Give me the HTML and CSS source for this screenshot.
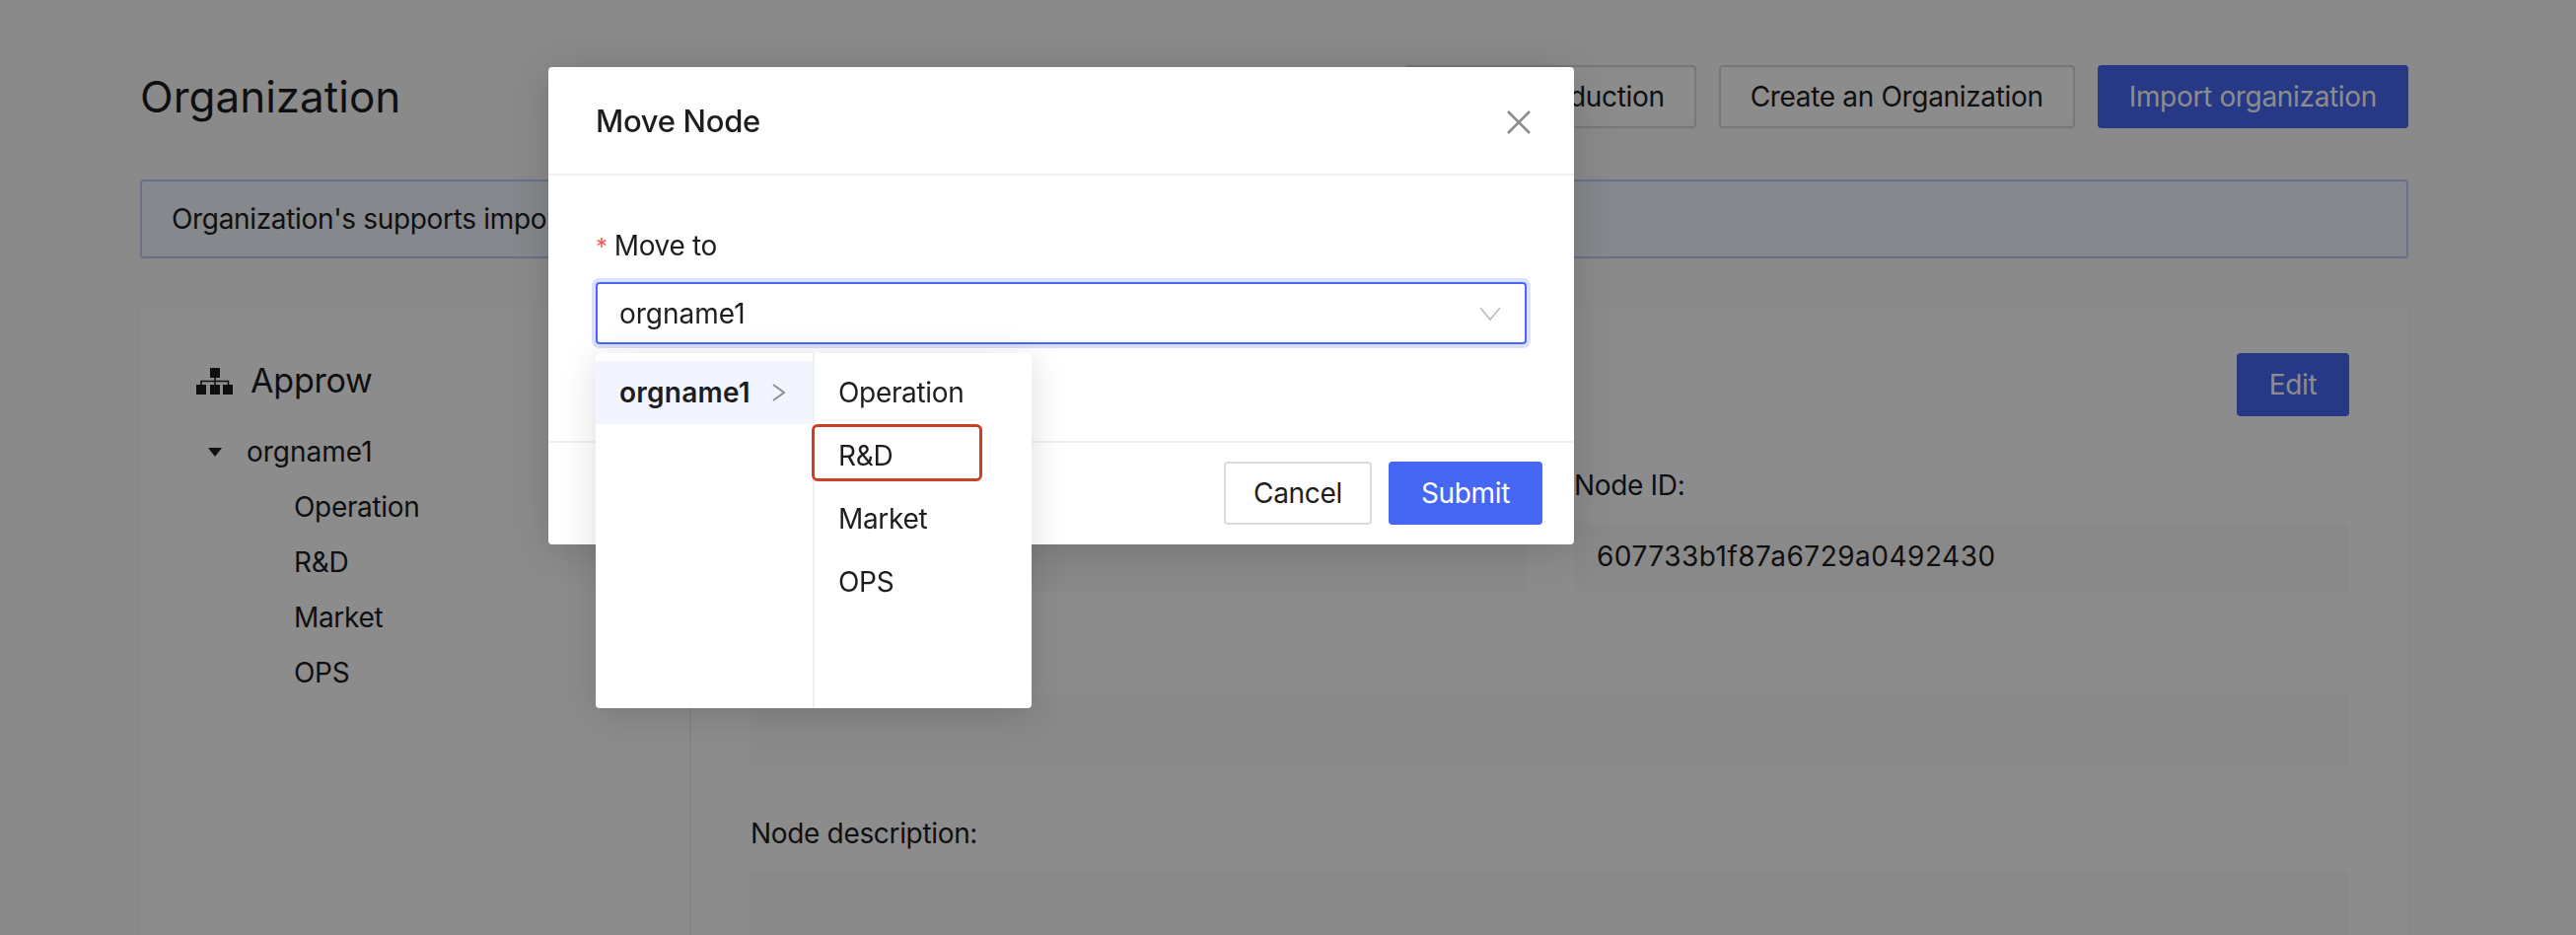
FILE: index.html
```html
<!DOCTYPE html>
<html lang="en">
<head>
<meta charset="utf-8">
<title>Organization</title>
<link rel="stylesheet" href="styles.css">
</head>
<body>
<div class="page">
  <header class="page-head">
    <h1 class="page-title">Organization</h1>
    <div class="head-actions">
      <button class="btn">Node introduction</button>
      <button class="btn">Create an Organization</button>
      <button class="btn btn-primary">Import organization</button>
    </div>
  </header>
  <div class="alert">Organization's supports import</div>
  <section class="card">
    <aside class="tree-col">
      <div class="org-title">
        <svg class="org-icon" viewBox="0 0 37 27" aria-hidden="true"><path d="M14 0h10v10h-10zM0 17h10v10h-10zM14 17h10v10h-10zM27 17h10v10h-10z" fill="#1c1c1c"/><path d="M19 10v7M5 17v-3.500h27.500v3.500" fill="none" stroke="#1c1c1c" stroke-width="1.600"/></svg>
        <span>Approw</span>
      </div>
      <ul class="tree">
        <li class="tree-root"><i class="caret"></i>orgname1</li>
        <li class="tree-leaf">Operation</li>
        <li class="tree-leaf">R&amp;D</li>
        <li class="tree-leaf">Market</li>
        <li class="tree-leaf">OPS</li>
      </ul>
    </aside>
    <div class="detail-col">
      <div class="detail-bar"><button class="btn btn-primary btn-edit">Edit</button></div>
      <div class="field-row">
        <div class="field"><div class="field-label"></div><div class="field-value"></div></div>
        <div class="field"><div class="field-label">Node ID:</div><div class="field-value field-id">607733b1f87a6729a0492430</div></div>
      </div>
      <div class="field-single"><div class="field-value"></div></div>
      <div class="field-desc"><div class="field-label">Node description:</div><div class="field-value field-tall"></div></div>
    </div>
  </section>
</div>

<div class="overlay"></div>

<div class="modal">
  <div class="modal-head">
    <span class="modal-title">Move Node</span>
    <svg class="modal-close" viewBox="0 0 24 24" aria-hidden="true"><path d="M1 1L23 23M23 1L1 23" fill="none" stroke="#8c8c8c" stroke-width="2.500"/></svg>
  </div>
  <div class="modal-body">
    <div class="form-label"><span class="req">*</span>Move to</div>
    <div class="select">
      <span class="select-value">orgname1</span>
      <svg class="select-arrow" viewBox="0 0 22 14" aria-hidden="true"><path d="M1 1L11 13L21 1" fill="none" stroke="#bfbfbf" stroke-width="1.800"/></svg>
    </div>
  </div>
  <div class="modal-foot">
    <button class="btn btn-foot">Cancel</button>
    <button class="btn btn-primary btn-foot">Submit</button>
  </div>
</div>

<div class="cascader">
  <ul class="cascader-col cascader-left">
    <li class="cascader-item is-active">orgname1<svg class="cascader-arrow" viewBox="0 0 13 18" aria-hidden="true"><path d="M1 1L12 9L1 17" fill="none" stroke="#8c8c8c" stroke-width="1.800"/></svg></li>
  </ul>
  <ul class="cascader-col cascader-right">
    <li class="cascader-item">Operation</li>
    <li class="cascader-item is-marked">R&amp;D</li>
    <li class="cascader-item">Market</li>
    <li class="cascader-item">OPS</li>
  </ul>
</div>
</body>
</html>
```

FILE: styles.css
```css
*, *::before, *::after { box-sizing: border-box; }
html, body { margin: 0; height: 948px; overflow: hidden; }
body { background: #fcfcfc; font-family: Inter, "Noto Sans", sans-serif; font-size: 28px; letter-spacing: -.33px; color: #1d1d1f; }
ul { list-style: none; margin: 0; padding: 0; }

.page { width: 2612px; height: 948px; padding: 66px 170px 0 142px; overflow: hidden; }
.page-head { display: flex; justify-content: space-between; align-items: center; height: 64px; }
.page-title { margin: 0; font-size: 44px; font-weight: 400; line-height: 64px; letter-spacing: 0; }
.head-actions { display: flex; gap: 23px; }

.btn { height: 64px; padding: 0 30px; border: 2px solid #d9d9d9; border-radius: 4px; background: #fff; font: inherit; letter-spacing: inherit; color: inherit; white-space: nowrap; }
.btn-primary { background: #4666f4; border-color: #4666f4; color: #fff; }

.alert { margin-top: 52px; height: 80px; padding: 0 30px; border: 2px solid #bfcdf8; border-radius: 4px; background: #f2f8ff; line-height: 76px; white-space: nowrap; }

.card { display: flex; margin-top: 48px; height: 700px; background: #fff; box-shadow: 0 0 6px rgba(0,0,0,.03); }
.tree-col { width: 559px; padding: 54px 0 0 57px; border-right: 2px solid #f0f0f0; flex: none; }
.org-title { display: flex; align-items: center; gap: 18px; font-size: 34px; line-height: 44px; letter-spacing: -.2px; }
.org-icon { width: 37px; height: 27px; flex: none; }
.tree { margin-top: 22px; }
.tree li { height: 56px; line-height: 56px; }
.tree-root { padding-left: 51px; position: relative; letter-spacing: 0; }
.caret { position: absolute; left: 12px; top: 24px; border: 7px solid transparent; border-top: 9px solid #1d1d1f; border-bottom: 0; }
.tree-leaf { padding-left: 99px; }

.detail-col { flex: 1; padding: 48px 60px 0 60px; }
.detail-bar { display: flex; justify-content: flex-end; height: 64px; }
.btn-edit { width: 114px; padding: 0; }
.field-row { display: grid; grid-template-columns: 1fr 1fr; column-gap: 49px; margin-top: 42px; }
.field-label { height: 56px; line-height: 56px; }
.field-value { height: 70px; padding: 0 23px; background: #fafafa; line-height: 68px; margin-top: 10px; }
.field-id { letter-spacing: .5px; }
.field-single { margin-top: 105px; }
.field-desc { margin-top: 42px; }
.field-tall { height: 120px; margin-top: 9px; }

.overlay { position: fixed; inset: 0; background: rgba(0,0,0,.45); }

.modal { position: absolute; left: 556px; top: 68px; width: 1040px; height: 484px; background: #fff; border-radius: 4px; display: flex; flex-direction: column; box-shadow: 0 6px 44px rgba(0,0,0,.16); }
.modal-head { display: flex; justify-content: space-between; align-items: center; height: 110px; padding: 0 44px 0 48px; border-bottom: 2px solid #f0f0f0; flex: none; }
.modal-title { font-size: 31px; font-weight: 500; letter-spacing: -.3px; }
.modal-close { width: 24px; height: 24px; margin-top: 4px; }
.modal-body { flex: 1; padding: 49px 48px 0; }
.form-label { height: 44px; line-height: 44px; }
.req { color: #f5534f; margin-right: 7px; font-size: 24px; }
.select { display: flex; justify-content: space-between; align-items: center; height: 63px; margin-top: 15px; padding: 0 24px 0 22px; border: 2px solid #4666f4; border-radius: 4px; box-shadow: 0 0 0 4px rgba(70,102,244,.2); }
.select-value { letter-spacing: 0; }
.select-arrow { width: 22px; height: 14px; }
.modal-foot { display: flex; justify-content: flex-end; gap: 17px; height: 105px; padding: 19px 32px 0; border-top: 2px solid #f0f0f0; flex: none; }
.btn-foot { padding: 0; width: 150px; }
.btn-primary.btn-foot { width: 156px; }

.cascader { position: absolute; left: 604px; top: 358px; width: 442px; height: 360px; padding: 0; background: #fff; border-radius: 4px; display: flex; box-shadow: 0 6px 36px rgba(0,0,0,.14); }
.cascader-col { padding-top: 8px; height: 100%; }
.cascader-left { width: 222px; border-right: 2px solid #f0f0f0; flex: none; }
.cascader-right { flex: 1; }
.cascader-item { display: flex; align-items: center; height: 64px; padding-left: 24px; position: relative; }
.cascader-left .cascader-item { justify-content: space-between; padding-right: 28px; font-weight: 600; letter-spacing: .25px; }
.is-active { background: #f2f5fe; }
.cascader-arrow { width: 13px; height: 18px; }
.is-marked::after { content: ""; position: absolute; left: -3px; top: 0; width: 173px; height: 58px; border: 3px solid #cc4125; border-radius: 6px; }
```
